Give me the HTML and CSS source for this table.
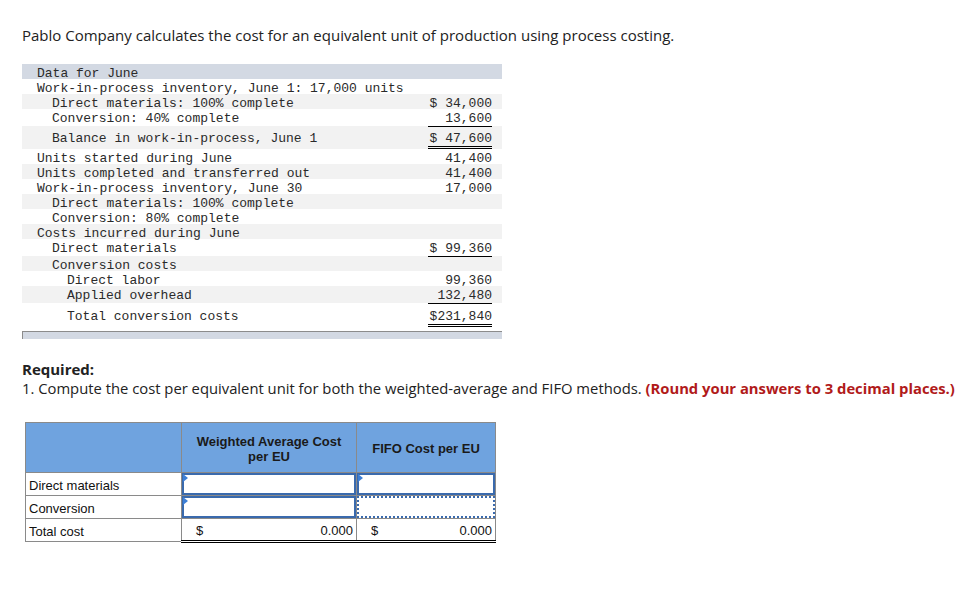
FILE: index.html
```html
<!DOCTYPE html>
<html>
<head>
<meta charset="utf-8">
<link rel="stylesheet" href="styles.css">
</head>
<body>
<div class="page">
  <p class="intro">Pablo Company calculates the cost for an equivalent unit of production using process costing.</p>

  <div class="data">
    <div class="row head"><span class="lbl l0">Data for June</span></div>
    <div class="row"><span class="lbl l0">Work-in-process inventory, June 1: 17,000 units</span></div>
    <div class="row alt"><span class="lbl l1">Direct materials: 100% complete</span><span class="val">$ 34,000</span></div>
    <div class="row under"><span class="lbl l1">Conversion: 40% complete</span><span class="val ul">13,600</span></div>
    <div class="row alt total"><span class="lbl l1">Balance in work-in-process, June 1</span><span class="val dbl">$ 47,600</span></div>
    <div class="row"><span class="lbl l0">Units started during June</span><span class="val">41,400</span></div>
    <div class="row alt"><span class="lbl l0">Units completed and transferred out</span><span class="val">41,400</span></div>
    <div class="row"><span class="lbl l0">Work-in-process inventory, June 30</span><span class="val">17,000</span></div>
    <div class="row alt"><span class="lbl l1">Direct materials: 100% complete</span></div>
    <div class="row"><span class="lbl l1">Conversion: 80% complete</span></div>
    <div class="row alt"><span class="lbl l0">Costs incurred during June</span></div>
    <div class="row under"><span class="lbl l1">Direct materials</span><span class="val ul">$ 99,360</span></div>
    <div class="row alt"><span class="lbl l1">Conversion costs</span></div>
    <div class="row"><span class="lbl l2">Direct labor</span><span class="val">99,360</span></div>
    <div class="row alt under"><span class="lbl l2">Applied overhead</span><span class="val ul">132,480</span></div>
    <div class="row total last"><span class="lbl l2">Total conversion costs</span><span class="val dbl">$231,840</span></div>
    <div class="foot"></div>
  </div>

  <p class="req">Required:</p>
  <p class="q">1. Compute the cost per equivalent unit for both the weighted-average and FIFO methods. <b class="red">(Round your answers to 3 decimal places.)</b></p>

  <table class="ans">
    <tr class="hrow">
      <th class="c1"></th>
      <th class="c2">Weighted Average Cost<br>per EU</th>
      <th class="c3">FIFO Cost per EU</th>
    </tr>
    <tr>
      <td class="lab">Direct materials</td>
      <td class="inp"><div class="box solid"><i class="tri"></i></div></td>
      <td class="inp"><div class="box solid"><i class="tri"></i></div></td>
    </tr>
    <tr>
      <td class="lab">Conversion</td>
      <td class="inp"><div class="box solid"><i class="tri"></i></div></td>
      <td class="inp"><div class="box dotted"></div></td>
    </tr>
    <tr>
      <td class="lab">Total cost</td>
      <td class="tot"><span class="cur">$</span><span class="num">0.000</span></td>
      <td class="tot"><span class="cur">$</span><span class="num">0.000</span></td>
    </tr>
  </table>
</div>
</body>
</html>
```

FILE: styles.css
```css
* { box-sizing: border-box; }
body {
  margin: 0;
  background: #fff;
  color: #222;
  font-family: "Open Sans", "Liberation Sans", sans-serif;
}
.page {
  padding: 26px 0 0 22px;
}
.intro {
  margin: 0;
  font-size: 15px;
  line-height: 18px;
  color: #222;
}
.data {
  margin-top: 20px;
  width: 480px;
  font-family: "Liberation Mono", "Courier New", monospace;
  font-size: 13px;
  color: #2a2a2a;
}
.row {
  display: flex;
  justify-content: space-between;
  align-items: flex-start;
  height: 15px;
  line-height: 15px;
  background: #fff;
}
.row > span { padding-top: 2px; }
.row.alt { background: #f2f2f2; }
.row.head { background: #d3d9e3; }
.row.under { height: 17px; }
.row.total { height: 23px; padding-top: 3px; }
.row.last { height: 24px; padding-top: 4px; }
.lbl { white-space: pre; }
.l0 { padding-left: 15px; }
.l1 { padding-left: 30px; }
.l2 { padding-left: 45px; }
.val {
  width: 64px;
  margin-right: 10px;
  text-align: right;
  white-space: pre;
}
.val.ul { border-bottom: 1px solid #000; }
.val.dbl { border-bottom: 3px double #000; }
.foot {
  margin-top: 4px;
  height: 8px;
  background: #d3d9e3;
  border-top: 1px solid #8c8c8c;
  border-left: 1px solid #8c8c8c;
}
.req {
  margin: 21px 0 0 0;
  font-size: 15px;
  line-height: 18px;
  font-weight: 700;
}
.q {
  margin: 1px 0 0 0;
  font-size: 14.8px;
  line-height: 18px;
}
.red { color: #b11a1a; }
.ans {
  margin: 25px 0 0 3px;
  border-collapse: collapse;
  font-family: "Liberation Sans", Arial, sans-serif;
  font-size: 13px;
  color: #111;
}
.ans th, .ans td {
  border: 1px solid #8a8a8a;
  padding: 0;
}
.hrow th {
  height: 50px;
  background: #6fa3df;
  font-weight: 700;
  font-size: 13px;
  line-height: 15px;
  text-align: center;
  color: #1a1a1a;
}
.c1 { width: 156px; }
.c2 { width: 175px; padding-top: 2px !important; }
.c3 { width: 139px; padding-top: 2px !important; }
.ans td { height: 23px; padding-top: 2px; }
.lab { padding-left: 3px !important; }
.inp { position: relative; }
.box {
  position: absolute;
  inset: 0;
}
.box.solid { border: 2px solid #3a6aad; }
.box.dotted { border: 2px dotted #3a6aad; }
.tri {
  position: absolute;
  left: -1px;
  top: -1px;
  width: 0;
  height: 0;
  border-top: 4px solid transparent;
  border-bottom: 4px solid transparent;
  border-left: 5px solid #3d7fd6;
}
.tot {
  border-bottom: 3px double #000 !important;
  padding: 2px 3px 0 14px !important;
}
.tot .cur { float: left; }
.tot .num { float: right; }
```
